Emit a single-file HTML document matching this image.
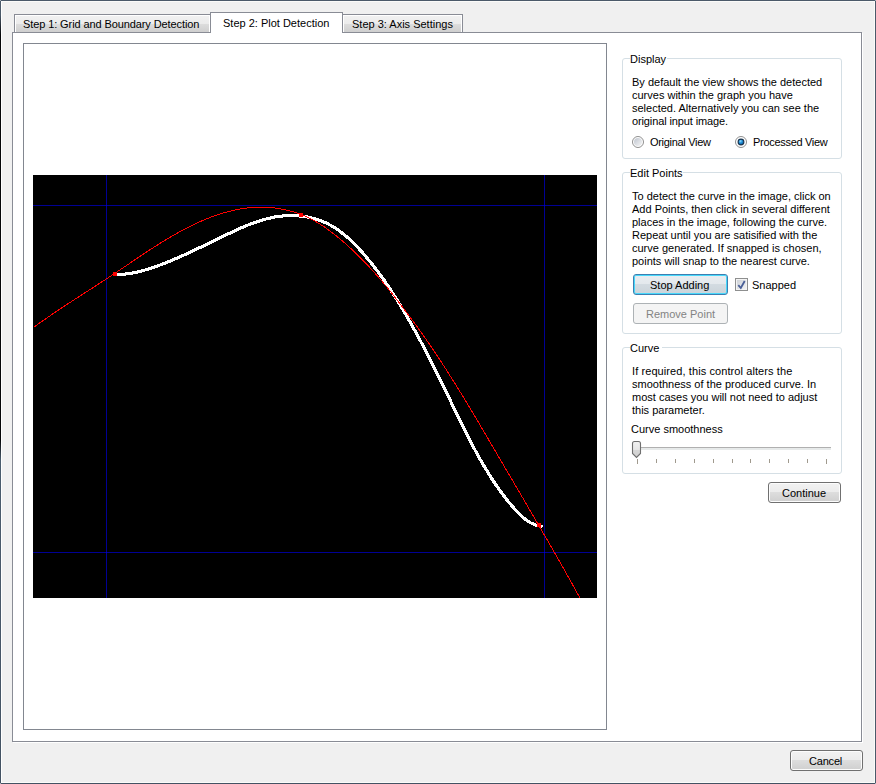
<!DOCTYPE html>
<html><head><meta charset="utf-8"><style>
*{margin:0;padding:0;box-sizing:border-box}
html,body{width:876px;height:784px;overflow:hidden;background:#f0f0f0}
body{position:relative;font-family:"Liberation Sans",sans-serif;font-size:11px;color:#000;line-height:13px}
.a{position:absolute}
.t{position:absolute;white-space:pre}
.tab{position:absolute;border:1px solid #898c95;border-bottom:none;background:linear-gradient(#f2f2f2 0,#ebebeb 53%,#dddddd 53%,#cfcfcf 100%);box-shadow:inset 1px 1px 0 #fff,inset -1px 0 0 #fff}
.grp{position:absolute;border:1px solid #d5dfe5;border-radius:3px}
.gt{position:absolute;background:#fff;padding:0 1px 0 0;white-space:pre}
.btn{position:absolute;border:1px solid #707070;border-radius:3px;background:linear-gradient(#f2f2f2 0,#ebebeb 50%,#dddddd 50%,#cfcfcf 100%);box-shadow:inset 0 0 0 1px #fcfcfc;text-align:center}
</style></head><body>
<!-- window frame -->
<div class="a" style="left:0;top:0;width:876px;height:1px;background:#4b5a6a"></div>
<div class="a" style="left:0;top:1px;width:876px;height:1px;background:#fbfbf9"></div>
<div class="a" style="left:0;top:783px;width:876px;height:1px;background:#435263"></div>
<div class="a" style="left:0;top:782px;width:876px;height:1px;background:#fbfbf9"></div>
<div class="a" style="left:0;top:0;width:1px;height:784px;background:linear-gradient(#4b5a6a 0,#4b5a6a 15px,#050608 35px,#050608 440px,#4b5d6e 460px,#435263 784px)"></div>
<div class="a" style="left:1px;top:1px;width:1px;height:782px;background:#fff"></div>
<div class="a" style="left:875px;top:0;width:1px;height:784px;background:#4b5a6a"></div>
<div class="a" style="left:874px;top:1px;width:1px;height:782px;background:#fbfbf9"></div>

<div class="a" style="left:0;top:0;width:1px;height:1px;background:#a3acb5"></div><div class="a" style="left:875px;top:0;width:1px;height:1px;background:#a3acb5"></div><div class="a" style="left:0;top:783px;width:1px;height:1px;background:#a3acb5"></div><div class="a" style="left:875px;top:783px;width:1px;height:1px;background:#a3acb5"></div>
<!-- tabs -->
<div class="tab" style="left:14px;top:14px;width:197px;height:18px"></div>
<div class="tab" style="left:342px;top:14px;width:121px;height:18px"></div>
<!-- panel -->
<div class="a" style="left:12px;top:32px;width:850px;height:710px;border:1px solid #898c95;background:#fff;box-shadow:1px 1px 0 #fff"></div>
<div class="a" style="left:210px;top:12px;width:133px;height:21px;border:1px solid #898c95;border-bottom:none;background:#fff"></div>
<div class="t" style="left:23px;top:18px;letter-spacing:-0.1px">Step 1: Grid and Boundary Detection</div>
<div class="t" style="left:223px;top:17px">Step 2: Plot Detection</div>
<div class="t" style="left:352px;top:18px">Step 3: Axis Settings</div>

<!-- picture box -->
<div class="a" style="left:23px;top:43px;width:584px;height:687px;border:1px solid #828790;background:#fff"></div>
<svg class="a" style="left:0;top:0" width="876" height="784">
<rect x="33" y="175" width="564" height="423" fill="#000"/>
<g shape-rendering="crispEdges">
<rect x="106" y="175" width="1" height="423" fill="#000094"/>
<rect x="544" y="175" width="1" height="423" fill="#000094"/>
<rect x="33" y="205" width="564" height="1" fill="#000094"/>
<rect x="33" y="552" width="564" height="1" fill="#000094"/>
<rect x="106" y="205" width="1" height="1" fill="#0000c8"/><rect x="544" y="205" width="1" height="1" fill="#0000c8"/><rect x="106" y="552" width="1" height="1" fill="#0000c8"/><rect x="544" y="552" width="1" height="1" fill="#0000c8"/>
</g>
<clipPath id="c"><rect x="33" y="175" width="564" height="423"/></clipPath>
<g clip-path="url(#c)">
<path d="M116.0 274.7 L118.3 274.7 L120.6 274.5 L122.9 274.3 L125.2 274.1 L127.5 273.8 L129.8 273.5 L132.1 273.1 L134.4 272.6 L136.6 272.2 L138.9 271.6 L141.2 271.1 L143.4 270.5 L145.6 269.8 L147.9 269.2 L150.1 268.5 L152.3 267.7 L154.5 267.0 L156.7 266.2 L158.9 265.4 L161.1 264.6 L163.3 263.8 L165.5 262.9 L167.7 262.0 L169.8 261.2 L172.0 260.3 L174.1 259.4 L176.2 258.4 L178.4 257.5 L180.5 256.6 L182.6 255.6 L184.7 254.7 L186.8 253.7 L188.9 252.7 L191.0 251.8 L193.1 250.8 L195.2 249.8 L197.3 248.8 L199.4 247.8 L201.5 246.8 L203.6 245.8 L205.6 244.8 L207.7 243.8 L209.8 242.7 L211.9 241.7 L214.0 240.7 L216.1 239.7 L218.1 238.7 L220.2 237.7 L222.3 236.7 L224.4 235.7 L226.5 234.7 L228.6 233.7 L230.7 232.7 L232.8 231.7 L235.0 230.7 L237.1 229.7 L239.2 228.8 L241.3 227.8 L243.5 226.9 L245.6 226.0 L247.8 225.1 L250.0 224.3 L252.1 223.5 L254.3 222.7 L256.5 221.9 L258.7 221.2 L260.9 220.5 L263.1 219.8 L265.3 219.2 L267.6 218.6 L269.8 218.1 L272.1 217.6 L274.3 217.1 L276.6 216.7 L278.9 216.4 L281.2 216.1 L283.5 215.9 L285.9 215.7 L288.2 215.6 L290.6 215.5 L292.9 215.6 L295.3 215.6 L297.6 215.8 L300.0 216.0 L302.3 216.2 L304.7 216.6 L307.0 216.9 L309.3 217.4 L311.6 217.9 L313.9 218.5 L316.1 219.2 L318.3 219.9 L320.5 220.6 L322.7 221.5 L324.8 222.4 L326.9 223.4 L328.9 224.4 L330.9 225.5 L332.9 226.7 L334.9 227.9 L336.8 229.1 L338.7 230.4 L340.5 231.8 L342.3 233.2 L344.1 234.6 L345.9 236.1 L347.7 237.6 L349.4 239.1 L351.1 240.7 L352.8 242.3 L354.4 244.0 L356.0 245.6 L357.7 247.3 L359.2 249.0 L360.8 250.8 L362.4 252.5 L363.9 254.3 L365.4 256.0 L366.9 257.8 L368.4 259.6 L369.9 261.4 L371.4 263.2 L372.8 265.0 L374.2 266.9 L375.6 268.7 L377.0 270.5 L378.4 272.4 L379.8 274.3 L381.2 276.2 L382.5 278.0 L383.9 279.9 L385.2 281.8 L386.5 283.8 L387.8 285.7 L389.1 287.6 L390.4 289.5 L391.6 291.5 L392.9 293.4 L394.1 295.4 L395.4 297.4 L396.6 299.3 L397.8 301.3 L399.0 303.3 L400.3 305.3 L401.5 307.2 L402.6 309.2 L403.8 311.2 L405.0 313.2 L406.2 315.2 L407.3 317.3 L408.5 319.3 L409.6 321.3 L410.8 323.3 L411.9 325.3 L413.1 327.3 L414.2 329.4 L415.3 331.4 L416.4 333.4 L417.5 335.5 L418.6 337.5 L419.7 339.6 L420.8 341.6 L421.9 343.7 L423.0 345.7 L424.1 347.8 L425.2 349.8 L426.3 351.9 L427.3 354.0 L428.4 356.0 L429.4 358.1 L430.5 360.2 L431.5 362.2 L432.6 364.3 L433.6 366.4 L434.7 368.5 L435.7 370.5 L436.7 372.6 L437.8 374.7 L438.8 376.8 L439.8 378.9 L440.8 380.9 L441.8 383.0 L442.9 385.1 L443.9 387.2 L444.9 389.3 L445.9 391.4 L446.9 393.5 L447.9 395.6 L448.9 397.7 L449.9 399.7 L450.9 401.8 L451.9 403.9 L452.9 406.0 L453.9 408.1 L454.9 410.2 L455.9 412.3 L457.0 414.4 L458.0 416.5 L459.0 418.5 L460.0 420.6 L461.0 422.7 L462.0 424.8 L463.1 426.9 L464.1 429.0 L465.2 431.0 L466.2 433.1 L467.2 435.2 L468.3 437.3 L469.4 439.3 L470.4 441.4 L471.5 443.5 L472.6 445.5 L473.7 447.6 L474.8 449.6 L475.9 451.7 L477.0 453.7 L478.1 455.7 L479.2 457.8 L480.4 459.8 L481.5 461.8 L482.7 463.8 L483.9 465.8 L485.1 467.8 L486.3 469.8 L487.5 471.8 L488.7 473.8 L489.9 475.7 L491.2 477.7 L492.4 479.6 L493.7 481.6 L495.0 483.5 L496.3 485.4 L497.6 487.3 L499.0 489.2 L500.3 491.1 L501.7 493.0 L503.1 494.8 L504.5 496.7 L505.9 498.5 L507.3 500.3 L508.8 502.1 L510.2 503.9 L511.7 505.7 L513.3 507.4 L514.8 509.1 L516.4 510.8 L518.0 512.5 L519.6 514.1 L521.3 515.7 L523.0 517.3 L524.8 518.8 L526.6 520.2 L528.5 521.5 L530.4 522.7 L532.5 523.7 L534.6 524.6 L536.8 525.3 L539.1 525.8 L541.5 526.1" fill="none" stroke="#fff" stroke-width="3.1" stroke-linecap="round" stroke-linejoin="round" shape-rendering="crispEdges"/>
<path d="M33.6 327.4 L35.7 325.9 L37.8 324.4 L39.9 322.8 L42.1 321.3 L44.2 319.8 L46.4 318.3 L48.5 316.8 L50.7 315.4 L52.8 313.9 L55.0 312.4 L57.2 311.0 L59.4 309.5 L61.5 308.0 L63.7 306.6 L65.9 305.2 L68.1 303.7 L70.3 302.3 L72.5 300.8 L74.7 299.4 L76.9 298.0 L79.1 296.6 L81.3 295.1 L83.5 293.7 L85.7 292.3 L87.9 290.9 L90.2 289.4 L92.4 288.0 L94.6 286.6 L96.8 285.2 L99.0 283.7 L101.2 282.3 L103.4 280.9 L105.6 279.4 L107.7 278.0 L109.9 276.6 L112.1 275.1 L114.3 273.7 L116.5 272.2 L118.6 270.8 L120.8 269.3 L123.0 267.9 L125.1 266.4 L127.3 264.9 L129.5 263.5 L131.6 262.0 L133.8 260.5 L136.0 259.1 L138.1 257.6 L140.3 256.2 L142.4 254.7 L144.6 253.3 L146.8 251.8 L149.0 250.4 L151.2 249.0 L153.3 247.6 L155.5 246.2 L157.7 244.8 L160.0 243.4 L162.2 242.0 L164.4 240.6 L166.6 239.3 L168.9 237.9 L171.1 236.6 L173.4 235.3 L175.7 234.0 L178.0 232.7 L180.3 231.5 L182.6 230.2 L184.9 229.0 L187.2 227.8 L189.6 226.6 L192.0 225.4 L194.3 224.3 L196.7 223.2 L199.1 222.1 L201.6 221.0 L204.0 220.0 L206.4 219.0 L208.9 218.0 L211.4 217.0 L213.8 216.1 L216.3 215.2 L218.8 214.4 L221.3 213.6 L223.8 212.8 L226.4 212.1 L228.9 211.5 L231.4 210.8 L234.0 210.2 L236.5 209.7 L239.1 209.2 L241.7 208.8 L244.3 208.4 L246.8 208.0 L249.4 207.7 L252.0 207.5 L254.6 207.3 L257.2 207.2 L259.8 207.1 L262.4 207.1 L265.0 207.2 L267.6 207.3 L270.3 207.5 L272.9 207.8 L275.5 208.1 L278.1 208.4 L280.7 208.9 L283.3 209.4 L285.8 209.9 L288.4 210.5 L290.9 211.2 L293.5 211.9 L296.0 212.7 L298.4 213.6 L300.9 214.5 L303.4 215.5 L305.8 216.5 L308.1 217.6 L310.5 218.7 L312.8 219.9 L315.1 221.2 L317.4 222.5 L319.6 223.9 L321.8 225.3 L324.0 226.7 L326.1 228.2 L328.2 229.7 L330.3 231.3 L332.4 232.9 L334.5 234.5 L336.5 236.1 L338.6 237.8 L340.6 239.5 L342.6 241.2 L344.6 242.9 L346.5 244.6 L348.5 246.4 L350.4 248.1 L352.4 249.9 L354.3 251.7 L356.2 253.5 L358.0 255.4 L359.9 257.2 L361.8 259.1 L363.6 260.9 L365.4 262.8 L367.2 264.7 L369.0 266.6 L370.8 268.6 L372.5 270.5 L374.3 272.4 L376.0 274.4 L377.8 276.4 L379.5 278.3 L381.2 280.3 L382.8 282.3 L384.5 284.3 L386.2 286.3 L387.8 288.3 L389.5 290.4 L391.1 292.4 L392.7 294.5 L394.3 296.5 L395.9 298.6 L397.5 300.6 L399.1 302.7 L400.7 304.8 L402.3 306.9 L403.9 308.9 L405.5 311.0 L407.0 313.1 L408.6 315.2 L410.2 317.3 L411.7 319.4 L413.3 321.5 L414.8 323.7 L416.4 325.8 L417.9 327.9 L419.5 330.0 L421.0 332.2 L422.5 334.3 L424.0 336.4 L425.5 338.6 L427.0 340.8 L428.5 342.9 L430.0 345.1 L431.5 347.2 L432.9 349.4 L434.4 351.6 L435.8 353.8 L437.3 356.0 L438.7 358.1 L440.2 360.3 L441.6 362.5 L443.0 364.7 L444.5 366.9 L445.9 369.1 L447.3 371.4 L448.7 373.6 L450.1 375.8 L451.5 378.0 L452.9 380.2 L454.3 382.4 L455.7 384.7 L457.0 386.9 L458.4 389.1 L459.8 391.4 L461.2 393.6 L462.5 395.8 L463.9 398.1 L465.2 400.3 L466.6 402.5 L468.0 404.8 L469.3 407.0 L470.7 409.3 L472.0 411.5 L473.4 413.8 L474.7 416.0 L476.0 418.3 L477.4 420.5 L478.7 422.8 L480.0 425.1 L481.4 427.3 L482.7 429.6 L484.0 431.8 L485.4 434.1 L486.7 436.4 L488.0 438.6 L489.3 440.9 L490.7 443.2 L492.0 445.4 L493.3 447.7 L494.6 449.9 L496.0 452.2 L497.3 454.5 L498.6 456.7 L499.9 459.0 L501.3 461.3 L502.6 463.5 L503.9 465.8 L505.2 468.1 L506.5 470.3 L507.9 472.6 L509.2 474.9 L510.5 477.1 L511.9 479.4 L513.2 481.6 L514.5 483.9 L515.8 486.2 L517.2 488.4 L518.5 490.7 L519.8 493.0 L521.1 495.2 L522.5 497.5 L523.8 499.7 L525.1 502.0 L526.4 504.3 L527.8 506.5 L529.1 508.8 L530.4 511.1 L531.7 513.3 L533.1 515.6 L534.4 517.9 L535.7 520.1 L537.0 522.4 L538.3 524.7 L539.7 526.9 L541.0 529.2 L542.3 531.5 L543.6 533.7 L544.9 536.0 L546.2 538.3 L547.6 540.5 L548.9 542.8 L550.2 545.1 L551.5 547.4 L552.8 549.6 L554.1 551.9 L555.4 554.2 L556.7 556.5 L558.0 558.7 L559.3 561.0 L560.6 563.3 L561.9 565.6 L563.2 567.9 L564.5 570.2 L565.8 572.4 L567.0 574.7 L568.3 577.0 L569.6 579.3 L570.9 581.6 L572.2 583.9 L573.4 586.2 L574.7 588.5 L576.0 590.8 L577.2 593.1 L578.5 595.4 L579.8 597.7 L581.0 600.0" fill="none" stroke="#f00" stroke-width="1" shape-rendering="crispEdges"/>
<g fill="#f00" shape-rendering="crispEdges">
<rect x="113" y="272" width="4" height="4"/>
<rect x="299" y="213" width="4" height="4"/>
<rect x="537" y="523" width="4" height="4"/>
</g>
</g>
</svg>

<!-- Display group -->
<div class="grp" style="left:622px;top:58px;width:220px;height:101px"></div>
<div class="gt" style="left:630px;top:53px;width:37px">Display</div>
<div class="t" style="left:632px;top:76px">By default the view shows the detected
curves within the graph you have
selected. Alternatively you can see the
<span style="letter-spacing:-0.12px">original input image.</span></div>
<svg class="a" style="left:632px;top:136px" width="12" height="12"><defs><linearGradient id="rg1" x1="0" y1="0" x2="1" y2="1"><stop offset="0" stop-color="#bfc5cf"/><stop offset="1" stop-color="#f6f6f6"/></linearGradient></defs><circle cx="6" cy="6" r="5.5" fill="#fff" stroke="#8f8f8f"/><circle cx="6" cy="6" r="4" fill="url(#rg1)"/></svg>
<div class="t" style="left:650px;top:136px;letter-spacing:-0.3px">Original View</div>
<svg class="a" style="left:735px;top:136px" width="12" height="12"><defs><radialGradient id="rg2" cx="0.4" cy="0.35" r="0.7"><stop offset="0" stop-color="#8fdcff"/><stop offset="0.45" stop-color="#1f8fd8"/><stop offset="1" stop-color="#0b4f8a"/></radialGradient></defs><circle cx="6" cy="6" r="5.5" fill="#fff" stroke="#8f8f8f"/><circle cx="6" cy="6" r="2.9" fill="url(#rg2)" stroke="#19344f" stroke-width="1.1"/></svg>
<div class="t" style="left:753px;top:136px;letter-spacing:-0.3px">Processed View</div>

<!-- Edit Points group -->
<div class="grp" style="left:622px;top:172px;width:220px;height:162px"></div>
<div class="gt" style="left:630px;top:167px;width:53px">Edit Points</div>
<div class="t" style="left:632px;top:190px">To detect the curve in the image, click on
Add Points, then click in several different
places in the image, following the curve.
Repeat until you are satisified with the
curve generated. If snapped is chosen,
points will snap to the nearest curve.</div>
<div class="btn" style="left:633px;top:274px;width:95px;height:21px;border-color:#3c7fb1;background:linear-gradient(#e9edf1 0,#e3e8ec 50%,#d3dbe1 50%,#cbd4da 100%);box-shadow:inset 0 0 0 1px #48d8fb"></div>
<div class="t" style="left:650px;top:279px">Stop Adding</div>
<div class="a" style="left:735px;top:278px;width:13px;height:13px;border:1px solid #8e8f8f;background:linear-gradient(135deg,#cbcfd5,#f6f6f6);box-shadow:inset 0 0 0 1px #f4f4f4"></div>
<svg class="a" style="left:735px;top:278px" width="13" height="13"><path d="M3.3 7.2 L5.8 10 L9.7 3" fill="none" stroke="#4a5f97" stroke-width="1.8"/></svg>
<div class="t" style="left:752px;top:279px">Snapped</div>
<div class="a" style="left:633px;top:303px;width:95px;height:21px;border:1px solid #adb2b5;border-radius:3px;background:#f4f4f4"></div>
<div class="t" style="left:646px;top:308px;color:#838383">Remove Point</div>

<!-- Curve group -->
<div class="grp" style="left:622px;top:347px;width:220px;height:127px"></div>
<div class="gt" style="left:630px;top:342px;width:32px">Curve</div>
<div class="t" style="left:632px;top:365px"><span style="letter-spacing:0.09px">If required, this control alters the</span>
smoothness of the produced curve. In
most cases you will not need to adjust
this parameter.</div>
<div class="t" style="left:631px;top:423px">Curve smoothness</div>
<div class="a" style="left:637px;top:447px;width:194px;height:1px;background:#b0b0b0"></div>
<div class="a" style="left:637px;top:448px;width:194px;height:2px;background:#e7eaea"></div>

<div class="a" style="left:637px;top:459px;width:1px;height:5px;background:#a09a8e"></div><div class="a" style="left:656px;top:459px;width:1px;height:4px;background:#a09a8e"></div><div class="a" style="left:675px;top:459px;width:1px;height:4px;background:#a09a8e"></div><div class="a" style="left:694px;top:459px;width:1px;height:4px;background:#a09a8e"></div><div class="a" style="left:713px;top:459px;width:1px;height:4px;background:#a09a8e"></div><div class="a" style="left:732px;top:459px;width:1px;height:4px;background:#a09a8e"></div><div class="a" style="left:750px;top:459px;width:1px;height:4px;background:#a09a8e"></div><div class="a" style="left:769px;top:459px;width:1px;height:4px;background:#a09a8e"></div><div class="a" style="left:788px;top:459px;width:1px;height:4px;background:#a09a8e"></div><div class="a" style="left:807px;top:459px;width:1px;height:4px;background:#a09a8e"></div><div class="a" style="left:826px;top:459px;width:1px;height:5px;background:#a09a8e"></div>
<svg class="a" style="left:630px;top:440px" width="14" height="20"><defs><linearGradient id="th" x1="0" y1="0" x2="0" y2="1"><stop offset="0" stop-color="#f2f2f2"/><stop offset="0.55" stop-color="#e6e6e6"/><stop offset="0.55" stop-color="#d6d6d6"/><stop offset="1" stop-color="#cfcfcf"/></linearGradient></defs><path d="M4.5 1.5 H8.5 Q10.5 1.5 10.5 3.5 V13.5 L6.5 17.5 L2.5 13.5 V3.5 Q2.5 1.5 4.5 1.5 Z" fill="url(#th)" stroke="#6f6f6f" stroke-width="1.1"/><path d="M116.0 274.7 L118.3 274.7 L120.6 274.5 L122.9 274.3 L125.2 274.1 L127.5 273.8 L129.8 273.5 L132.1 273.1 L134.4 272.6 L136.6 272.2 L138.9 271.6 L141.2 271.1 L143.4 270.5 L145.6 269.8 L147.9 269.2 L150.1 268.5 L152.3 267.7 L154.5 267.0 L156.7 266.2 L158.9 265.4 L161.1 264.6 L163.3 263.8 L165.5 262.9 L167.7 262.0 L169.8 261.2 L172.0 260.3 L174.1 259.4 L176.2 258.4 L178.4 257.5 L180.5 256.6 L182.6 255.6 L184.7 254.7 L186.8 253.7 L188.9 252.7 L191.0 251.8 L193.1 250.8 L195.2 249.8 L197.3 248.8 L199.4 247.8 L201.5 246.8 L203.6 245.8 L205.6 244.8 L207.7 243.8 L209.8 242.7 L211.9 241.7 L214.0 240.7 L216.1 239.7 L218.1 238.7 L220.2 237.7 L222.3 236.7 L224.4 235.7 L226.5 234.7 L228.6 233.7 L230.7 232.7 L232.8 231.7 L235.0 230.7 L237.1 229.7 L239.2 228.8 L241.3 227.8 L243.5 226.9 L245.6 226.0 L247.8 225.1 L250.0 224.3 L252.1 223.5 L254.3 222.7 L256.5 221.9 L258.7 221.2 L260.9 220.5 L263.1 219.8 L265.3 219.2 L267.6 218.6 L269.8 218.1 L272.1 217.6 L274.3 217.1 L276.6 216.7 L278.9 216.4 L281.2 216.1 L283.5 215.9 L285.9 215.7 L288.2 215.6 L290.6 215.5 L292.9 215.6 L295.3 215.6 L297.6 215.8 L300.0 216.0 L302.3 216.2 L304.7 216.6 L307.0 216.9 L309.3 217.4 L311.6 217.9 L313.9 218.5 L316.1 219.2 L318.3 219.9 L320.5 220.6 L322.7 221.5 L324.8 222.4 L326.9 223.4 L328.9 224.4 L330.9 225.5 L332.9 226.7 L334.9 227.9 L336.8 229.1 L338.7 230.4 L340.5 231.8 L342.3 233.2 L344.1 234.6 L345.9 236.1 L347.7 237.6 L349.4 239.1 L351.1 240.7 L352.8 242.3 L354.4 244.0 L356.0 245.6 L357.7 247.3 L359.2 249.0 L360.8 250.8 L362.4 252.5 L363.9 254.3 L365.4 256.0 L366.9 257.8 L368.4 259.6 L369.9 261.4 L371.4 263.2 L372.8 265.0 L374.2 266.9 L375.6 268.7 L377.0 270.5 L378.4 272.4 L379.8 274.3 L381.2 276.2 L382.5 278.0 L383.9 279.9 L385.2 281.8 L386.5 283.8 L387.8 285.7 L389.1 287.6 L390.4 289.5 L391.6 291.5 L392.9 293.4 L394.1 295.4 L395.4 297.4 L396.6 299.3 L397.8 301.3 L399.0 303.3 L400.3 305.3 L401.5 307.2 L402.6 309.2 L403.8 311.2 L405.0 313.2 L406.2 315.2 L407.3 317.3 L408.5 319.3 L409.6 321.3 L410.8 323.3 L411.9 325.3 L413.1 327.3 L414.2 329.4 L415.3 331.4 L416.4 333.4 L417.5 335.5 L418.6 337.5 L419.7 339.6 L420.8 341.6 L421.9 343.7 L423.0 345.7 L424.1 347.8 L425.2 349.8 L426.3 351.9 L427.3 354.0 L428.4 356.0 L429.4 358.1 L430.5 360.2 L431.5 362.2 L432.6 364.3 L433.6 366.4 L434.7 368.5 L435.7 370.5 L436.7 372.6 L437.8 374.7 L438.8 376.8 L439.8 378.9 L440.8 380.9 L441.8 383.0 L442.9 385.1 L443.9 387.2 L444.9 389.3 L445.9 391.4 L446.9 393.5 L447.9 395.6 L448.9 397.7 L449.9 399.7 L450.9 401.8 L451.9 403.9 L452.9 406.0 L453.9 408.1 L454.9 410.2 L455.9 412.3 L457.0 414.4 L458.0 416.5 L459.0 418.5 L460.0 420.6 L461.0 422.7 L462.0 424.8 L463.1 426.9 L464.1 429.0 L465.2 431.0 L466.2 433.1 L467.2 435.2 L468.3 437.3 L469.4 439.3 L470.4 441.4 L471.5 443.5 L472.6 445.5 L473.7 447.6 L474.8 449.6 L475.9 451.7 L477.0 453.7 L478.1 455.7 L479.2 457.8 L480.4 459.8 L481.5 461.8 L482.7 463.8 L483.9 465.8 L485.1 467.8 L486.3 469.8 L487.5 471.8 L488.7 473.8 L489.9 475.7 L491.2 477.7 L492.4 479.6 L493.7 481.6 L495.0 483.5 L496.3 485.4 L497.6 487.3 L499.0 489.2 L500.3 491.1 L501.7 493.0 L503.1 494.8 L504.5 496.7 L505.9 498.5 L507.3 500.3 L508.8 502.1 L510.2 503.9 L511.7 505.7 L513.3 507.4 L514.8 509.1 L516.4 510.8 L518.0 512.5 L519.6 514.1 L521.3 515.7 L523.0 517.3 L524.8 518.8 L526.6 520.2 L528.5 521.5 L530.4 522.7 L532.5 523.7 L534.6 524.6 L536.8 525.3 L539.1 525.8 L541.5 526.1" fill="none" stroke="#fff" stroke-width="0.9"/></svg>

<!-- Continue -->
<div class="btn" style="left:768px;top:482px;width:73px;height:21px"></div>
<div class="t" style="left:782px;top:487px">Continue</div>
<!-- Cancel -->
<div class="btn" style="left:790px;top:750px;width:73px;height:21px"></div>
<div class="t" style="left:809px;top:755px;letter-spacing:-0.2px">Cancel</div>
</body></html>
